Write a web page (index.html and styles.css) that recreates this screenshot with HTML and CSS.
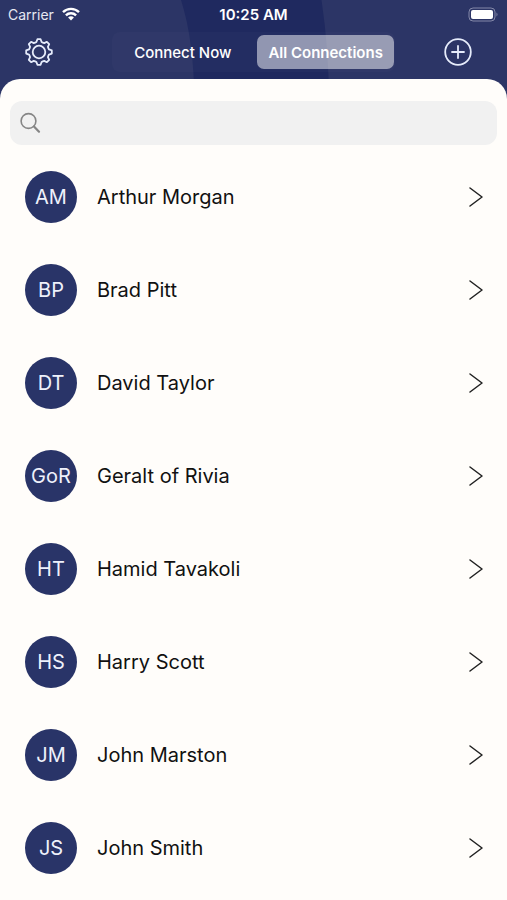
FILE: index.html
```html
<!DOCTYPE html>
<html lang="en">

<head>
    <meta charset="UTF-8">
    <meta name="viewport" content="width=device-width, initial-scale=1.0">
    <title>All Connections</title>
    <link rel="stylesheet" href="styles.css">
</head>

<body>
    <!-- shared chevron -->
    <svg class="defs" aria-hidden="true">
        <symbol id="chevron" viewBox="0 0 14 22">
            <path d="M1 2l12 9-12 9" fill="none" stroke="currentColor" stroke-width="1.5" stroke-linecap="round" stroke-linejoin="round"/>
        </symbol>
    </svg>

    <header class="header">
        <svg class="header-shape" viewBox="0 0 150 104" aria-hidden="true">
            <path d="M2 0Q15 40 15.5 104H150Q150 50 142.5 0Z" fill="#1f295f"/>
        </svg>

        <div class="status-bar">
            <div class="status-left">
                <span>Carrier</span>
                <svg width="18" height="14" viewBox="0 0 18 14" aria-hidden="true">
                    <g fill="none" stroke="#fff" stroke-width="2.4">
                        <path d="M1 5.2a11.4 11.4 0 0 1 16 0"/>
                        <path d="M3.9 8.3a7.2 7.2 0 0 1 10.2 0"/>
                    </g>
                    <path d="M9 13.6l-2.9-3a4 4 0 0 1 5.8 0z" fill="#fff"/>
                </svg>
            </div>
            <time class="status-time">10:25 AM</time>
            <div class="status-right">
                <svg width="31" height="15" viewBox="0 0 31 15" aria-hidden="true">
                    <rect x="1" y="1" width="26" height="13" rx="4" fill="none" stroke="#8388a8" stroke-width="1"/>
                    <rect x="3" y="3" width="22" height="9" rx="2" fill="#fff"/>
                    <path d="M28.5 5.5q2 2 0 4z" fill="#8388a8"/>
                </svg>
            </div>
        </div>

        <nav class="toolbar">
            <button type="button" class="icon-button" aria-label="Settings">
                <svg width="30" height="30" viewBox="-15 -15 30 30" aria-hidden="true">
                    <g fill="none" stroke="#e6ecfb" stroke-width="1.8" stroke-linejoin="round">
                        <circle r="6.3"/>
                        <path d="M-1.6-12.8H1.6L2.6-10Q3.8-9.2 5.2-8.9L7.9-10.2 10.2-7.9 8.9-5.2Q9.2-3.8 10-2.6L12.8-1.6V1.6L10 2.6Q9.2 3.8 8.9 5.2L10.2 7.9 7.9 10.2 5.2 8.9Q3.8 9.2 2.6 10L1.6 12.8H-1.6L-2.6 10Q-3.8 9.2-5.2 8.9L-7.9 10.2-10.2 7.9-8.9 5.2Q-9.2 3.8-10 2.6L-12.8 1.6V-1.6L-10-2.6Q-9.2-3.8-8.9-5.2L-10.2-7.9-7.9-10.2-5.2-8.9Q-3.8-9.2-2.6-10Z"/>
                    </g>
                </svg>
            </button>
            <div class="segments">
                <button type="button" class="segment">Connect Now</button>
                <button type="button" class="segment active" aria-pressed="true">All Connections</button>
            </div>
            <button type="button" class="icon-button add" aria-label="Add connection">
                <svg width="30" height="30" viewBox="-15 -15 30 30" aria-hidden="true">
                    <g fill="none" stroke="#e6ecfb" stroke-width="1.8" stroke-linecap="round">
                        <circle r="12.8"/>
                        <path d="M-6 0H6M0-6V6"/>
                    </g>
                </svg>
            </button>
        </nav>
    </header>

    <main class="sheet">
        <label class="search">
            <svg width="22" height="22" viewBox="0 0 22 22" aria-hidden="true">
                <g fill="none" stroke="#858585" stroke-linecap="round">
                    <circle cx="8.5" cy="9" r="7.4" stroke-width="1.6"/>
                    <path d="M14 14.5l5 5.2" stroke-width="2.2"/>
                </g>
            </svg>
            <input type="search" class="search-input" aria-label="Search connections">
        </label>

        <ul class="contacts">
            <li><a href="#" class="contact">
                <span class="avatar">AM</span>
                <span class="name">Arthur Morgan</span>
                <svg class="chevron"><use href="#chevron"/></svg>
            </a></li>
            <li><a href="#" class="contact">
                <span class="avatar">BP</span>
                <span class="name">Brad Pitt</span>
                <svg class="chevron"><use href="#chevron"/></svg>
            </a></li>
            <li><a href="#" class="contact">
                <span class="avatar">DT</span>
                <span class="name">David Taylor</span>
                <svg class="chevron"><use href="#chevron"/></svg>
            </a></li>
            <li><a href="#" class="contact">
                <span class="avatar">GoR</span>
                <span class="name">Geralt of Rivia</span>
                <svg class="chevron"><use href="#chevron"/></svg>
            </a></li>
            <li><a href="#" class="contact">
                <span class="avatar">HT</span>
                <span class="name">Hamid Tavakoli</span>
                <svg class="chevron"><use href="#chevron"/></svg>
            </a></li>
            <li><a href="#" class="contact">
                <span class="avatar">HS</span>
                <span class="name">Harry Scott</span>
                <svg class="chevron"><use href="#chevron"/></svg>
            </a></li>
            <li><a href="#" class="contact">
                <span class="avatar">JM</span>
                <span class="name">John Marston</span>
                <svg class="chevron"><use href="#chevron"/></svg>
            </a></li>
            <li><a href="#" class="contact">
                <span class="avatar">JS</span>
                <span class="name">John Smith</span>
                <svg class="chevron"><use href="#chevron"/></svg>
            </a></li>
        </ul>
    </main>
</body>

</html>
```
FILE: styles.css
```css
* {
    box-sizing: border-box;
}

body {
    margin: 0;
    min-height: 100vh;
    display: flex;
    flex-direction: column;
    background-color: #fffdfa;
    font-family: Inter, "Liberation Sans", sans-serif;
    color: #111;
}

button {
    padding: 0;
    border: none;
    background: none;
    font-family: inherit;
    color: inherit;
    cursor: pointer;
}

svg {
    display: block;
}

.defs {
    position: absolute;
    width: 0;
    height: 0;
}

/* header */
.header {
    position: relative;
    padding-bottom: 28px;
    background-color: #2c3566;
    color: #fff;
}

/* darker band behind the bar */
.header-shape {
    position: absolute;
    top: 0;
    left: 50%;
    height: 100%;
    transform: translateX(-50%);
}

.status-bar {
    position: relative;
    display: grid;
    grid-template-columns: 1fr auto 1fr;
    align-items: center;
    height: 28px;
    padding: 0 8px;
    font-size: 14px;
}

.status-left {
    display: flex;
    align-items: center;
    gap: 8px;
    color: #e6e8f2;
}

.status-time {
    font-size: 15px;
    font-weight: 600;
}

.status-right {
    display: flex;
    justify-content: flex-end;
}

.toolbar {
    position: relative;
    display: grid;
    grid-template-columns: 1fr auto 1fr;
    align-items: center;
    height: 48px;
    padding: 0 24px;
}

.icon-button {
    justify-self: start;
}

.icon-button.add {
    justify-self: end;
    margin-right: 10px;
}

.segments {
    display: flex;
    padding: 3px 1px;
    border-radius: 8px;
    background-color: rgba(255, 255, 255, 0.02);
}

.segment {
    height: 34px;
    padding: 0 11px;
    border-radius: 7px;
    font-size: 15px;
    font-weight: 500;
}

.segment:first-child {
    padding: 0 26px 0 21px;
}

.segment.active {
    background-color: rgba(255, 255, 255, 0.5);
    font-weight: 600;
}

/* content */
.sheet {
    position: relative;
    flex: 1;
    margin-top: -25px;
    padding-top: 22px;
    border-radius: 20px 20px 0 0;
    background-color: #fffdfa;
}

.search {
    display: flex;
    align-items: center;
    gap: 8px;
    height: 44px;
    margin: 0 10px;
    padding: 0 10px;
    border-radius: 12px;
    background-color: #f1f1f1;
}

.search-input {
    flex: 1;
    min-width: 0;
    border: none;
    outline: none;
    background: none;
    font-family: inherit;
    font-size: 18px;
}

.contacts {
    margin: 5px 0 0;
    padding: 0;
    list-style: none;
}

.contact {
    display: flex;
    align-items: center;
    gap: 20px;
    height: 93px;
    padding: 0 24px 0 25px;
    color: inherit;
    text-decoration: none;
    font-size: 20px;
}

.avatar {
    display: flex;
    align-items: center;
    justify-content: center;
    width: 52px;
    height: 52px;
    border-radius: 50%;
    background-color: #293468;
    color: #eef1fb;
}

.name {
    flex: 1;
}

.chevron {
    width: 14px;
    height: 22px;
    color: #222;
}
```
